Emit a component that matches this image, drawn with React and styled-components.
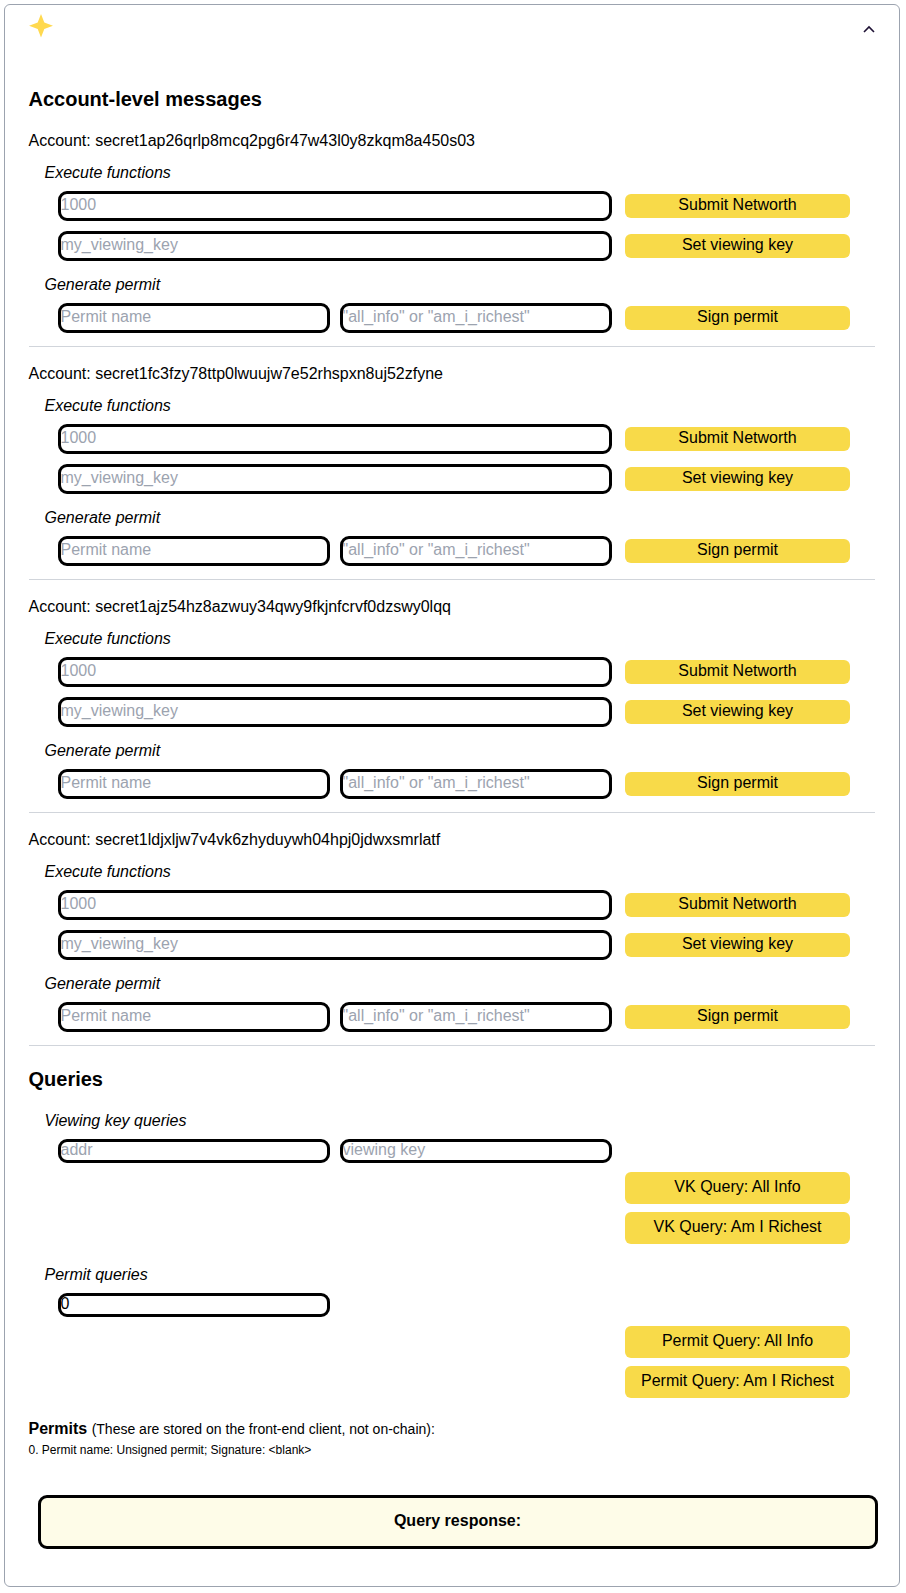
import React from 'react';
import styled, { createGlobalStyle } from 'styled-components';

const Global = createGlobalStyle`
  *, *::before, *::after { box-sizing: border-box; }
  body {
    margin: 0;
    background: #fff;
    color: #000;
    font-family: "Liberation Sans", Arial, sans-serif;
    font-size: 16px;
    line-height: 24px;
  }
`;

const Card = styled.main`
  width: 896px;
  height: 1583px;
  margin: 4px 0 0 4px;
  padding: 8px 24px 0 23.5px;
  border: 1px solid #9ca3af;
  border-radius: 6px;
`;

const Header = styled.header`
  display: flex;
  justify-content: space-between;
  align-items: flex-start;
  height: 72px;
`;

const Toggle = styled.button`
  display: flex;
  margin: 8px -2px 0 0;
  padding: 0;
  border: 0;
  background: none;
`;

const Heading = styled.h2`
  margin: ${({ $top = 0 }) => $top}px 0 1px;
  font-size: 20px;
  line-height: 28px;
  font-weight: 700;
`;

const AccountCard = styled.section`
  height: 233px;
  padding-top: 15px;
  border-bottom: 1px solid #d1d5db;
`;

const AccountName = styled.p`
  margin: 0;
`;

const Label = styled.p`
  margin: ${({ $top = 8 }) => $top}px 0 9px 16px;
  font-style: italic;
`;

const Row = styled.div`
  display: flex;
  gap: 16px;
  margin: 0 0 ${({ $bottom = 0 }) => $bottom}px 32px;
`;

const Input = styled.input`
  width: ${({ $half }) => ($half ? 266 : 548)}px;
  height: ${({ $short }) => ($short ? 18 : 24)}px;
  padding: 0 0 2px;
  border: 0;
  border-radius: 6px;
  outline: 3px solid #000;
  background: #fff;
  color: #000;
  font: inherit;
  line-height: normal;
  &::placeholder { color: #9ca3af; opacity: 1; }
`;

const Button = styled.button`
  width: 225px;
  height: ${({ $tall }) => ($tall ? 32 : 24)}px;
  margin-left: 0.5px;
  padding: 0 0 2px;
  border: 0;
  border-radius: 6px;
  background: #f8da49;
  color: #000;
  font: inherit;
  line-height: 22px;
`;

const Actions = styled.div`
  display: flex;
  flex-direction: column;
  align-items: flex-end;
  gap: 8px;
  margin: 12px 25px 0 0;
`;

const Permits = styled.div`
  margin-top: 19px;
`;

const PermitsTitle = styled.p`
  margin: 0 0 1px;
  span { font-size: 14px; }
`;

const PermitItem = styled.p`
  margin: 0;
  font-size: 12px;
  line-height: 16px;
`;

const Response = styled.div`
  width: 840px;
  height: 54px;
  margin: 37px 0 0 9px;
  padding-top: 11px;
  border: 3px solid #000;
  border-radius: 9px;
  background: #fefce8;
  text-align: center;
  font-weight: 700;
`;

const accounts = [
  'secret1ap26qrlp8mcq2pg6r47w43l0y8zkqm8a450s03',
  'secret1fc3fzy78ttp0lwuujw7e52rhspxn8uj52zfyne',
  'secret1ajz54hz8azwuy34qwy9fkjnfcrvf0dzswy0lqq',
  'secret1ldjxljw7v4vk6zhyduywh04hpj0jdwxsmrlatf',
];

function AccountSection({ address }) {
  return (
    <AccountCard>
      <AccountName>Account: {address}</AccountName>
      <Label>Execute functions</Label>
      <Row $bottom={16}>
        <Input placeholder="1000" />
        <Button>Submit Networth</Button>
      </Row>
      <Row>
        <Input placeholder="my_viewing_key" />
        <Button>Set viewing key</Button>
      </Row>
      <Label $top={15}>Generate permit</Label>
      <Row>
        <Input $half placeholder="Permit name" />
        <Input $half placeholder={'"all_info" or "am_i_richest"'} />
        <Button>Sign permit</Button>
      </Row>
    </AccountCard>
  );
}

export default function App() {
  return (
    <>
      <Global />
      <Card>
        <Header>
          <svg width="26" height="26" viewBox="0 0 26 26" fill="#ffd94f">
            <path d="M12 0.9L15.3 9.5L24 12.8L15.3 16.1L12 24.6L8.7 16.1L0.1 12.8L8.7 9.5Z" />
          </svg>
          <Toggle aria-label="Collapse">
            <svg width="16" height="16" viewBox="0 0 16 16" fill="none" stroke="#1f1235" strokeWidth="1.6">
              <path d="M3 11L8 6L13 11" />
            </svg>
          </Toggle>
        </Header>
        <Heading>Account-level messages</Heading>
        {accounts.map((address) => (
          <AccountSection key={address} address={address} />
        ))}
        <Heading $top={19}>Queries</Heading>
        <Label $top={16}>Viewing key queries</Label>
        <Row>
          <Input $half $short placeholder="addr" />
          <Input $half $short placeholder="viewing key" />
        </Row>
        <Actions>
          <Button $tall>VK Query: All Info</Button>
          <Button $tall>VK Query: Am I Richest</Button>
        </Actions>
        <Label $top={19}>Permit queries</Label>
        <Row>
          <Input $half $short defaultValue="0" />
        </Row>
        <Actions>
          <Button $tall>Permit Query: All Info</Button>
          <Button $tall>Permit Query: Am I Richest</Button>
        </Actions>
        <Permits>
          <PermitsTitle>
            <b>Permits</b> <span>(These are stored on the front-end client, not on-chain):</span>
          </PermitsTitle>
          <PermitItem>0. Permit name: Unsigned permit; Signature: &lt;blank&gt;</PermitItem>
        </Permits>
        <Response>Query response:</Response>
      </Card>
    </>
  );
}
